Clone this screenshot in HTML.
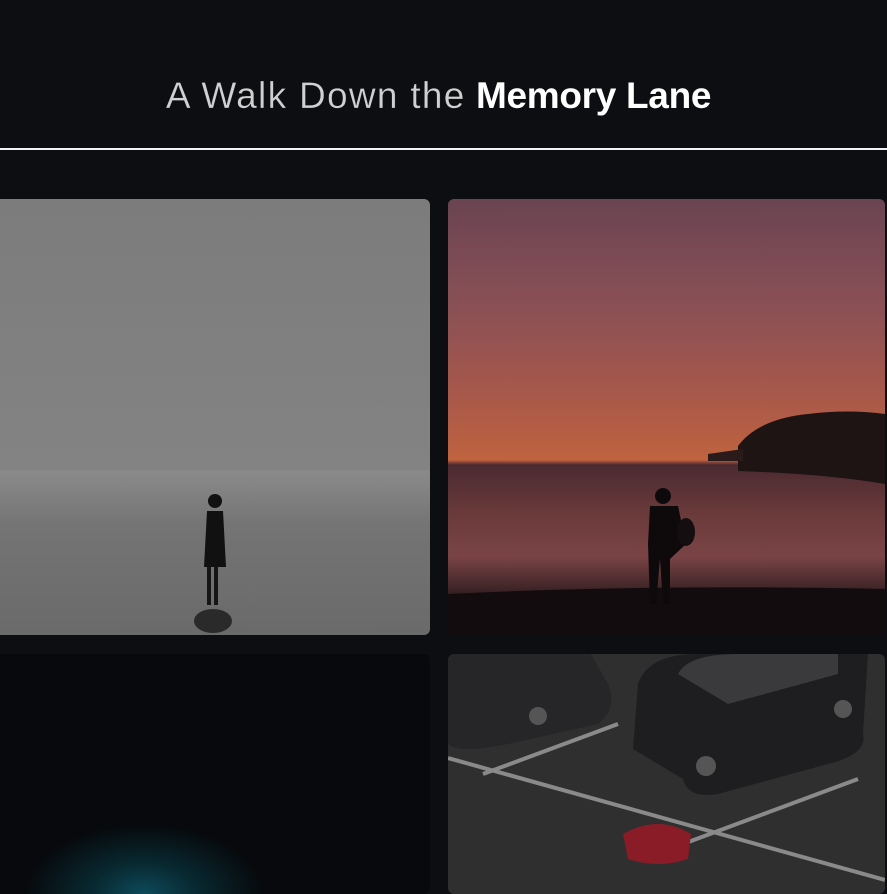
<!DOCTYPE html>
<html><head><meta charset="utf-8"><style>
html,body{margin:0;padding:0;background:#0c0e12;width:887px;height:887px;overflow:hidden}
h1{position:absolute;left:0;width:877px;top:75px;margin:0;text-align:center;font-family:"Liberation Sans",sans-serif;font-size:37px;color:#d0d0d0;font-weight:normal;white-space:nowrap}
h1 span{letter-spacing:1.3px;-webkit-text-stroke:0.3px #0c0e12}
h1 b{color:#fff;font-weight:bold;letter-spacing:-0.3px}
.line{position:absolute;left:0;top:148px;width:887px;height:2px;background:#f2f2f2}
.card{position:absolute;border-radius:6px;overflow:hidden}
</style></head><body>
<h1><span>A Walk Down the</span> <b>Memory Lane</b></h1>
<div class="line"></div>

<div class="card" style="left:-6px;top:199px;width:436px;height:436px;background:linear-gradient(#7c7c7c 0%,#838383 62%,#8a8a8a 62.5%,#747474 75%,#6a6a6a 100%)">
<svg width="436" height="436" style="position:absolute;left:0;top:0">
<ellipse cx="219" cy="422" rx="19" ry="12" fill="#2a2a2a"/>
<circle cx="221" cy="302" r="7" fill="#111"/>
<path d="M213 312 L229 312 L232 368 L210 368 Z" fill="#111"/>
<rect x="213" y="368" width="4" height="38" fill="#151515"/>
<rect x="220" y="368" width="4" height="38" fill="#151515"/>
</svg></div>

<div class="card" style="left:448px;top:199px;width:437px;height:436px;background:linear-gradient(#6a4452 0%,#8a5055 25%,#a8584a 45%,#c0633f 60%,#b0573c 59.5%,#4a2a30 61%,#6a3a3a 72%,#7a4446 82%,#3a2224 90%,#140c10 93%,#120c0f 100%)">
<svg width="437" height="436" style="position:absolute;left:0;top:0">
<path d="M290 247 Q310 220 360 215 Q400 210 437 215 L437 285 Q380 275 290 272 Z" fill="#1e1414"/>
<path d="M260 255 L295 250 L295 262 L260 262Z" fill="#2a1a1a"/>
<path d="M0 395 Q200 385 437 390 L437 436 L0 436Z" fill="#120c0f"/>
<circle cx="215" cy="297" r="8" fill="#0e0a0c"/>
<path d="M202 307 L230 307 L238 345 L222 360 L222 405 L215 405 L212 360 L208 405 L202 405 L200 345 Z" fill="#0e0a0c"/>
<ellipse cx="238" cy="333" rx="9" ry="14" fill="#140e10"/>
</svg></div>

<div class="card" style="left:-6px;top:654px;width:436px;height:240px;background:radial-gradient(ellipse 120px 70px at 150px 240px,#0e4a5a 0%,#082830 45%,rgba(8,10,13,0) 100%),#07090c"></div>

<div class="card" style="left:448px;top:654px;width:437px;height:240px;background:#2f2f30">
<svg width="437" height="240" style="position:absolute;left:0;top:0">
<path d="M0 -5 L140 -5 L160 30 Q170 55 150 70 L60 90 Q10 100 0 90 Z" fill="#262628"/>
<path d="M190 30 Q200 0 250 0 L420 0 L415 80 Q420 100 380 110 L270 140 Q240 145 235 125 L185 95 Z" fill="#1e1e20"/>
<path d="M230 20 Q240 0 290 0 L390 0 L390 20 L280 50 Z" fill="#3a3a3c"/>
<circle cx="258" cy="112" r="10" fill="#555"/>
<circle cx="395" cy="55" r="9" fill="#555"/>
<circle cx="90" cy="62" r="9" fill="#555"/>
<g stroke="#8a8a8a" stroke-width="4" fill="none">
<path d="M0 104 L437 226"/>
<path d="M35 120 L170 70"/>
<path d="M235 190 L410 125"/>
</g>
<path d="M175 180 Q210 160 243 180 L240 205 Q210 215 180 205 Z" fill="#8a1c28"/>
</svg></div>
</body></html>
